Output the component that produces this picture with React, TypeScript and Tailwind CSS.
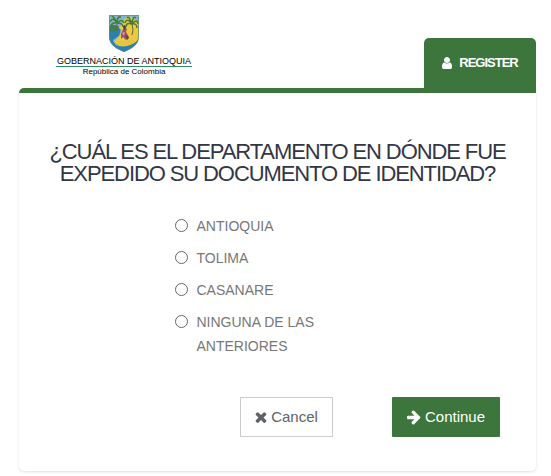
import type { ReactNode } from "react";

const options = ["ANTIOQUIA", "TOLIMA", "CASANARE", "NINGUNA DE LAS ANTERIORES"];

function Icon({ viewBox, className, children }: { viewBox: string; className: string; children: ReactNode }) {
  return (
    <svg viewBox={viewBox} className={className} fill="currentColor" aria-hidden="true">
      {children}
    </svg>
  );
}

function Shield() {
  return (
    <svg viewBox="0 0 30 38" className="h-[38px] w-[30px]" aria-hidden="true">
      <defs>
        <clipPath id="shield">
          <path d="M0 1H30V22C30 31 22 35 15 38C8 35 0 31 0 22Z" />
        </clipPath>
      </defs>
      <g clipPath="url(#shield)">
        <rect width="30" height="38" fill="#7fb8cc" />
        <path d="M0 14L6 11L12 15L10 22L4 26L10 38H0Z" fill="#2f7eb0" />
        <path d="M10 14Q14 9 16 5Q19 1 24 4L30 9V29L20 32Q12 32 5 28Q8 24 11 21Q14 17 10 14Z" fill="#ecca3e" />
        <path d="M3 30Q12 34 21 29L30 26V38H0Z" fill="#2c80ad" />
        <path d="M4 27Q15 28 21 26L28 27Q20 34 10 32Z" fill="#e5c43f" />
        <path d="M0 12Q5 9 10 13L8 17L0 18Z" fill="#427e58" />
        <g fill="none" stroke="#477c3a" strokeWidth="1.5">
          <path d="M8 9Q4 2 1 8M8 9Q4 1 3 3M8 9Q8 2 12 3M8 9Q13 4 15 9M8 9Q14 9 14 13M8 9Q3 8 2 12" />
          <path d="M23 10Q18 3 16 9M23 10Q20 1 18 4M23 10Q24 1 27 4M23 10Q28 4 29 10M23 10Q28 9 28 14M23 10Q17 8 17 13" />
        </g>
        <path d="M8 9L8 17M23 10Q25 16 23 21" fill="none" stroke="#66672f" strokeWidth="1" />
        <path d="M15 13L18 15L17 18L20 23L17 26L14 23L12 25L12 20Z" fill="#9c526b" />
        <path d="M14 12L16 11L17 14L15 16Z" fill="#553b3b" />
        <path d="M13 19L16 18L15 22Z" fill="#d2a2a7" />
        <path d="M16 20L20 24L18 26Z" fill="#593a64" />
      </g>
      <path d="M0.5 1.5H29.5V22C29.5 31 22 34.5 15 37.5C8 34.5 0.5 31 0.5 22Z" fill="none" stroke="#668b78" strokeWidth="0.8" />
    </svg>
  );
}

export default function App() {
  return (
    <div className="bg-white pr-[15px] pb-1 pl-[19px] font-['Liberation_Sans',Arial,sans-serif]">
      <header className="flex items-end justify-between pt-[14px]">
        <div className="mb-[11px] ml-[37px] flex flex-col items-center">
          <Shield />
          <div className="mt-1 border-b border-[#2c8b61] px-px text-[9px] leading-[10px] whitespace-nowrap text-black">
            GOBERNACIÓN DE ANTIOQUIA
          </div>
          <div className="text-[8px] leading-[10px] text-black">República de Colombia</div>
        </div>
        <a
          href="#register"
          className="flex h-[50px] w-28 items-center justify-center gap-[7px] rounded-t-[5px] bg-[#3c763d] text-[13px] font-bold tracking-[-1px] text-white"
        >
          <Icon viewBox="0 0 1280 1792" className="h-[14px] w-[10px]">
            <path d="M1280 1399q0 109-62.5 187t-150.5 78h-854q-88 0-150.5-78t-62.5-187q0-85 8.5-160.5t31.5-152 58.5-131 94-89 134.5-34.5q131 128 313 128t313-128q76 0 134.5 34.5t94 89 58.5 131 31.5 152 8.5 160.5zm-256-887q0 159-112.5 271.5t-271.5 112.5-271.5-112.5-112.5-271.5 112.5-271.5 271.5-112.5 271.5 112.5 112.5 271.5z" />
          </Icon>
          REGISTER
        </a>
      </header>
      <form className="overflow-hidden rounded-tl-[5px] rounded-b-[5px] bg-white shadow-[0_1px_3px_rgba(0,0,0,0.12)]">
        <div className="h-[5px] bg-[#3c763d]" />
        <div className="px-5 pt-12 pb-[34px]">
          <fieldset>
            <legend className="w-full text-center text-[22px] leading-[22px] tracking-tighter text-[#333645]">
              ¿CUÁL ES EL DEPARTAMENTO EN DÓNDE FUE EXPEDIDO SU DOCUMENTO DE IDENTIDAD?
            </legend>
            <div className="mx-auto mt-[29px] flex w-[206px] flex-col gap-2 pr-10">
              {options.map((option) => (
                <label key={option} className="flex items-start gap-[9px] text-[14px] leading-6 text-[#777777]">
                  <input
                    type="radio"
                    name="departamento"
                    value={option}
                    className="mt-[5px] size-[13px] shrink-0 appearance-none rounded-full border border-[#666666] bg-white checked:bg-[#3c763d]"
                  />
                  {option}
                </label>
              ))}
            </div>
          </fieldset>
          <div className="mt-[39px] flex justify-end gap-[59px] pr-4 text-[15px] leading-5">
            <button type="button" className="flex h-10 w-[93px] items-center justify-center gap-1 border border-[#cccccc] bg-white text-[#5f6367]">
              <Icon viewBox="302 238 1188 1316" className="h-[12px] w-[12px]">
                <path d="M1490 1322q0 40-28 68l-136 136q-28 28-68 28t-68-28l-294-294-294 294q-28 28-68 28t-68-28l-136-136q-28-28-28-68t28-68l294-294-294-294q-28-28-28-68t28-68l136-136q28-28 68-28t68 28l294 294 294-294q28-28 68-28t68 28l136 136q28 28 28 68t-28 68l-294 294 294 294q28 28 28 68z" />
              </Icon>
              Cancel
            </button>
            <button type="submit" className="flex h-10 w-[108px] items-center justify-center gap-1 rounded-[1px] bg-[#3c763d] text-white">
              <Icon viewBox="128 128 1536 1664" className="h-[15px] w-[14px]">
                <path d="M1600 960q0 54-37 91l-651 651q-39 37-91 37-51 0-90-37l-75-75q-38-38-38-91t38-91l293-293h-704q-52 0-84.5-37.5t-32.5-90.5v-128q0-53 32.5-90.5t84.5-37.5h704l-293-294q-38-36-38-90t38-90l75-75q38-38 90-38 53 0 91 38l651 651q37 35 37 90z" />
              </Icon>
              Continue
            </button>
          </div>
        </div>
      </form>
    </div>
  );
}
